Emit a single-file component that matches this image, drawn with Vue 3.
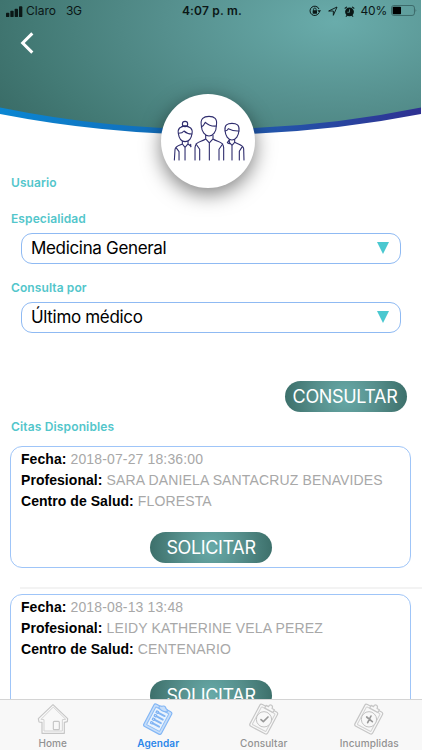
<script setup>
const fields = [
  { label: 'Especialidad', value: 'Medicina General' },
  { label: 'Consulta por', value: 'Último médico' },
]

const citas = [
  { fecha: '2018-07-27 18:36:00', profesional: 'SARA DANIELA SANTACRUZ BENAVIDES', centro: 'FLORESTA' },
  { fecha: '2018-08-13 13:48', profesional: 'LEIDY KATHERINE VELA PEREZ', centro: 'CENTENARIO' },
]

const tabs = [
  { id: 'home', label: 'Home' },
  { id: 'agendar', label: 'Agendar', active: true },
  { id: 'consultar', label: 'Consultar' },
  { id: 'incumplidas', label: 'Incumplidas' },
]
</script>

<template>
  <div class="screen">
    <header class="hero">
      <svg class="hero-bg" viewBox="0 0 422 200" aria-hidden="true">
        <defs>
          <radialGradient id="teal" gradientUnits="userSpaceOnUse" cx="0" cy="0" r="1" gradientTransform="translate(335 22) scale(380 190)">
            <stop offset="0" stop-color="#69acab" />
            <stop offset="0.45" stop-color="#558f8d" />
            <stop offset="0.8" stop-color="#437a75" />
            <stop offset="1" stop-color="#3a6c67" />
          </radialGradient>
          <linearGradient id="rim" x1="0" x2="1" y1="0" y2="0">
            <stop offset="0" stop-color="#0b86d2" />
            <stop offset="0.35" stop-color="#1170bd" />
            <stop offset="0.65" stop-color="#2355ab" />
            <stop offset="1" stop-color="#2f3192" />
          </linearGradient>
        </defs>
        <path d="M0 0H421V114Q211 155 0 114Z" fill="url(#rim)" />
        <path d="M0 0H421V107.500Q211 150.500 0 107.500Z" fill="url(#teal)" />
      </svg>

      <div class="status">
        <div class="status-left">
          <svg class="signal" viewBox="0 0 51 33" aria-hidden="true">
            <rect x="0" y="20" width="10" height="13" rx="2.500" />
            <rect x="13" y="14" width="10" height="19" rx="2.500" />
            <rect x="26" y="8" width="10" height="25" rx="2.500" />
            <rect x="39" y="1" width="10" height="32" rx="2.500" />
          </svg>
          <span class="carrier">Claro</span>
          <span class="network">3G</span>
        </div>
        <span class="clock">4:07 p. m.</span>
        <div class="status-right">
          <svg class="lock" viewBox="0 0 36 36" aria-hidden="true">
            <path d="M30 23A14 14 0 1 1 30 12" fill="none" stroke="#0b1716" stroke-width="3" />
            <path d="M25 16H36L31 23Z" />
            <rect x="11" y="16" width="13" height="10" rx="1" />
            <path d="M13.500 17V13a4 4 0 0 1 8 0v4" fill="none" stroke="#0b1716" stroke-width="2.500" />
          </svg>
          <svg class="arrow" viewBox="0 0 30 30" aria-hidden="true">
            <path d="M2 15 27 3 16 28V15Z" fill="none" stroke="#0b1716" stroke-width="2.800" stroke-linejoin="round" />
          </svg>
          <svg class="alarm" viewBox="0 0 30 30" aria-hidden="true">
            <circle cx="15" cy="16" r="12" />
            <path d="M3 6 7 3M23 3 27 6M6 28 9 25M24 28 21 25" stroke="#0b1716" stroke-width="3" stroke-linecap="round" />
            <path d="M15 9V17H9" fill="none" stroke="#66a7a5" stroke-width="2" />
          </svg>
          <span class="percent">40%</span>
          <svg class="battery" viewBox="0 0 78 34" aria-hidden="true">
            <rect x="1.500" y="1.500" width="69" height="30" rx="7" fill="none" stroke="#35605f" stroke-width="2.500" />
            <rect x="5" y="5" width="25" height="23" rx="2.500" fill="#000" />
            <path d="M74 12q4 4.500 0 9z" fill="#35605f" />
          </svg>
        </div>
      </div>

      <svg class="back" viewBox="0 0 42 66" aria-hidden="true">
        <path d="M37 4 8 33 37 62" />
      </svg>

      <div class="avatar">
        <svg class="people" viewBox="68 72 218 142" aria-hidden="true">
          <circle cx="104" cy="102" r="8" />
          <path d="M94 110Q104 105 114 110" />
          <path d="M84 131C81 115 90 109 104 109S128 115 125 131C123 145 115 155 104 155S86 145 84 131Z" />
          <path d="M85 130Q96 130 101 123Q110 132 124 132" />
          <path d="M96 154V162L104 172 113 162V154M104 172V210M96 162C86 167 76 168 74 178L72 210M113 162L122 169M86 210V185L77 173M121 163V170" />
          <path d="M153 107C149 86 160 79 176 79S202 86 198 107C198 126 188 138 176 138S154 126 153 107Z" />
          <path d="M153 111Q160 108 165 97Q179 110 198 108" />
          <path d="M166 136V147L177 159 188 147V136M177 159V210M166 147C151 157 135 155 134 173V210M188 147C203 157 219 155 220 173V210M148 210V178L137 162M206 210V178L217 162" />
          <path d="M224 121C222 105 231 100 245 100S268 105 266 121C265 137 257 150 245 150S225 137 224 121Z" />
          <path d="M224 123Q231 122 234 116Q249 124 266 123" />
          <path d="M237 149V157L245 166 253 157V149M245 166V210M253 157C265 164 278 164 280 176L281 210M267 210V184L276 170M236 151L231 158 237 161" />
        </svg>
      </div>
    </header>

    <main class="content">
      <p class="label user">Usuario</p>
      <div v-for="f in fields" :key="f.label" class="field">
        <p class="label">{{ f.label }}</p>
        <div class="select">
          <span>{{ f.value }}</span>
          <svg class="caret" viewBox="0 0 12 12" aria-hidden="true"><path d="M0 0H12L6 12Z" /></svg>
        </div>
      </div>

      <div class="action"><button class="pill consult">CONSULTAR</button></div>

      <p class="label list-title">Citas Disponibles</p>
      <div class="list">
        <div v-for="c in citas" :key="c.fecha" class="item">
          <article class="card">
            <p><b>Fecha:</b> {{ c.fecha }}</p>
            <p><b>Profesional:</b> {{ c.profesional }}</p>
            <p><b>Centro de Salud:</b> {{ c.centro }}</p>
            <button class="pill request">SOLICITAR</button>
          </article>
        </div>
      </div>
    </main>

    <nav class="tabs">
      <a v-for="t in tabs" :key="t.id" class="tab" :class="{ active: t.active }">
        <svg class="tab-icon" viewBox="0 0 96 96" aria-hidden="true">
          <template v-if="t.id === 'home'">
            <path class="outer" d="M48 5 4 47 6 57 15 58V91H82V58L91 56 92 47Z" />
            <path class="inner" d="M48 13 12 49 21 50V84H76V50L85 49Z" />
            <rect class="outer" x="49" y="55" width="18" height="25" rx="3" />
          </template>
          <template v-else-if="t.id === 'agendar'">
            <g transform="rotate(28 48 49)">
              <rect class="outer" x="17" y="11" width="60" height="76" rx="6" />
              <rect class="inner" x="25" y="19" width="44" height="60" rx="2" />
              <path class="outer" d="M33 16Q34 9 40 9Q47 1 54 9Q60 9 62 16Q48 25 33 16Z" />
              <path class="lines" d="M34 31H61M34 43H61M34 55H61M34 67H61" />
              <path class="rings" d="M33 28h6v6h-6zM33 40h6v6h-6zM33 52h6v6h-6zM33 64h6v6h-6z" />
            </g>
          </template>
          <template v-else>
            <g transform="rotate(28 48 49)">
              <rect class="outer" x="17" y="12" width="60" height="74" rx="6" />
              <rect class="inner" x="24" y="19" width="46" height="60" rx="2" />
              <path class="outer" d="M34 15V9H42Q42 1 48 1Q54 1 54 9H62V18H34Z" />
            </g>
            <circle class="disc" cx="48" cy="49" r="23" />
            <path v-if="t.id === 'consultar'" class="mark" d="M39 50 46 56 60 42" />
            <path v-else class="mark" d="M41 42 58 56M54 39 44 59" />
          </template>
        </svg>
        <span>{{ t.label }}</span>
      </a>
    </nav>
  </div>
</template>

<style>
body { background: #fff; overflow: hidden; }
</style>

<style scoped>
p { margin: 0; }
.screen {
  width: 422px; height: 750px; overflow: hidden;
  display: flex; flex-direction: column;
  background: #fff; color: #000;
  font-family: Inter, "Liberation Sans", sans-serif;
}
.hero { position: relative; flex: none; height: 174px; }
.hero-bg { position: absolute; inset: 0; width: 422px; height: 200px; }
.status {
  position: relative; height: 22px; padding: 0 5px 0 6px;
  display: grid; grid-template-columns: 1fr auto 1fr; align-items: center;
  line-height: 22px; color: #0b1716;
}
.status svg { fill: #0b1716; flex: none; }
.status-left, .status-right { display: flex; align-items: center; }
.status-right { justify-content: flex-end; }
.signal { width: 17px; height: 11px; }
.carrier { margin-left: 3px; font-size: 12px; }
.network { margin-left: 10px; font-size: 12px; letter-spacing: -0.3px; }
.clock { font-weight: 600; font-size: 12px; letter-spacing: 0.2px; padding-left: 1px; }
.lock { width: 12px; height: 12px; }
.arrow { width: 10px; height: 10px; margin-left: 7px; }
.alarm { width: 11px; height: 11px; margin-left: 6px; }
.percent { margin-left: 5px; font-size: 12px; letter-spacing: -0.2px; }
.battery { width: 26px; height: 11.3px; margin-left: 4px; }
.back { position: relative; display: block; width: 14px; height: 22px; margin: 10px 0 0 20px; }
.back path { fill: none; stroke: #fff; stroke-width: 9; }
.avatar {
  position: absolute; left: 161px; top: 94px; width: 94px; height: 94px;
  border-radius: 50%; background: #fff;
  box-shadow: 0 6px 20px rgba(0, 0, 0, 0.5);
  display: flex; align-items: center; justify-content: center;
}
.people { width: 72.700px; height: 47.300px; margin: -6px 0 0 2px; }
.people * { fill: none; stroke: #2f2d6e; stroke-width: 3.300; stroke-linecap: round; stroke-linejoin: round; }
.content { flex: 1; min-height: 0; overflow: hidden; position: relative; }
.label { padding-left: 11px; font-size: 12px; font-weight: 600; line-height: 18px; letter-spacing: 0.1px; color: #53c6cb; }
.user { margin-bottom: 18px; }
.field { height: 69px; }
.select {
  margin: 5px 21px 0; height: 31px; box-sizing: border-box; padding: 0 11px 0 9px;
  border: 1px solid #8fbaf3; border-radius: 11px;
  display: flex; align-items: center; justify-content: space-between;
  font-size: 17px; line-height: 27px; letter-spacing: -0.33px;
}
.caret { width: 12px; height: 12px; margin-bottom: 1px; fill: #4ac8d0; }
.action { display: flex; justify-content: flex-end; margin: 33px 15px 0 0; }
.pill {
  border: 0; padding: 0; height: 31px; width: 122px; border-radius: 16px;
  background: radial-gradient(ellipse 62px 62px at 50% 50%, #67aaa8 0%, #568f8c 50%, #3c6f6a 100%);
  color: #fff; font: 400 18px/31px Inter, sans-serif; letter-spacing: -0.35px;
}
.consult { padding-right: 2px; }
.list-title { margin-top: 6px; letter-spacing: 0.15px; }
.list { margin-top: 10px; }
.item + .item { border-top: 2px solid #f3f3f3; margin-left: 20px; }
.item + .item .card { margin: 5px 11px 0 -10px; }
.card {
  margin: 0 11px 19px 10px; height: 122px; box-sizing: border-box; padding: 1.500px 9px 0 10px;
  border: 1px solid #9fc5f8; border-radius: 12px;
  display: flex; flex-direction: column;
  font: 14px/21px "Liberation Sans", Arial, sans-serif; letter-spacing: 0.14px; color: #a8a8a8; white-space: nowrap;
}
.card b { color: #000; letter-spacing: 0.05px; }
.request { align-self: center; margin-top: 20.500px; flex: none; }
.tabs {
  position: relative; flex: none; height: 51px; box-sizing: border-box;
  border-top: 1px solid #d4d4d4; background: #f8f8f8;
  display: grid; grid-template-columns: repeat(4, 105.500px);
}
.tab {
  display: flex; flex-direction: column; align-items: center;
  padding-top: 3px; font-size: 10px; font-weight: 500; line-height: 12px; letter-spacing: 0.1px; color: #929292;
}
.tab span { margin-top: 1.500px; }
.tab.active { color: #2a86ea; font-weight: 600; }
.tab-icon { width: 32px; height: 32px; flex: none; }
.tab-icon * { stroke-linejoin: round; stroke-linecap: round; }
.outer { fill: #f8f8f8; stroke: #c6c6c6; stroke-width: 3.500; }
.inner { fill: none; stroke: #d2d2d2; stroke-width: 3; }
.disc { fill: #f8f8f8; stroke: #c2c2c2; stroke-width: 3; }
.mark { fill: none; stroke: #999; stroke-width: 5; }
.active .outer { fill: #c7def9; stroke: #82b6f5; }
.active .inner { fill: #eaf3fd; stroke: #8bbcf6; }
.lines { fill: none; stroke: #83b6f4; stroke-width: 6; }
.rings { fill: #d5e7fc; stroke: #7bb0f2; stroke-width: 3; }
</style>
